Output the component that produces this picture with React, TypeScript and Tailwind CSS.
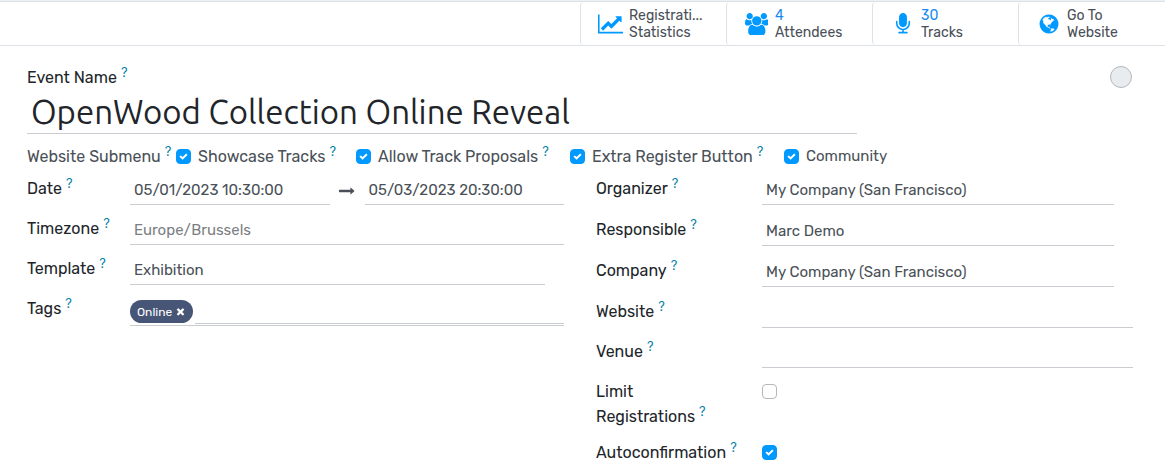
import { useId } from "react";
import type { ReactNode } from "react";

const LINE_CHART =
  "M2048 1536v128h-2048v-1536h128v1408h1920zM1920 288v435q0 21-19.5 29.5t-35.5-7.5l-121-121-633 633q-10 10-23 10t-23-10l-233-233-416 416-192-192 585-585q10-10 23-10t23 10l233 233 464-464-121-121q-16-16-7.5-35.5t29.5-19.5h435q14 0 23 9t9 23z";
const GROUP =
  "M593 896q-162 5-265 128h-134q-82 0-138-40.5t-56-118.5q0-353 124-353 6 0 43.5 21t97.5 42.5 119 21.5q67 0 133-23-5 37-5 66 0 139 81 256zm1071 637q0 120-73 189.5t-194 69.5h-874q-121 0-194-69.5t-73-189.5q0-53 3.5-103.5t14-109 26.5-108.5 43-97.5 62-81 85.5-53.5 111.5-20q10 0 43 21.5t73 48 107 48 135 21.5 135-21.5 107-48 73-48 43-21.5q61 0 111.5 20t85.5 53.5 62 81 43 97.5 26.5 108.5 14 109 3.5 103.5zm-1024-1277q0 106-75 181t-181 75-181-75-75-181 75-181 181-75 181 75 75 181zm704 384q0 159-112.5 271.5t-271.5 112.5-271.5-112.5-112.5-271.5 112.5-271.5 271.5-112.5 271.5 112.5 112.5 271.5zm576 225q0 78-56 118.5t-138 40.5h-134q-103-123-265-128 81-117 81-256 0-29-5-66 66 23 133 23 59 0 119-21.5t97.5-42.5 43.5-21q124 0 124 353zm-128-609q0 106-75 181t-181 75-181-75-75-181 75-181 181-75 181 75 75 181z";
const MICROPHONE =
  "M1472 704v128q0 221-147.5 384.5t-364.5 187.5v132h256q26 0 45 19t19 45-19 45-45 19h-640q-26 0-45-19t-19-45 19-45 45-19h256v-132q-217-24-364.5-187.5t-147.5-384.5v-128q0-26 19-45t45-19 45 19 19 45v128q0 185 131.5 316.5t316.5 131.5 316.5-131.5 131.5-316.5v-128q0-26 19-45t45-19 45 19 19 45zm-256-384v512q0 132-94 226t-226 94-226-94-94-226v-512q0-132 94-226t226-94 226 94 94 226z";
const GLOBE =
  "M896 128q209 0 385.5 103t279.5 279.5 103 385.5-103 385.5-279.5 279.5-385.5 103-385.5-103-279.5-279.5-103-385.5 103-385.5 279.5-279.5 385.5-103zm274 521q-2 1-9.5 9.5t-13.5 9.5q2 0 4.5-5t5-11 3.5-7q6-7 22-15 14-6 52-12 34-8 51 11-2-2 9.5-13t14.5-12q3-2 15-4.5t15-7.5l2-22q-12 1-17.5-7t-6.5-21q0 2-6 8 0-7-4.5-8t-11.5 1-9 1q-10-3-15-7.5t-8-16.5-4-15q-2-5-9.5-11t-9.5-10q-1-2-2.5-5.5t-3-6.5-4-5.5-5.5-2.5-7 5-7.5 10-4.5 5q-3-2-6-1.5t-4.5 1-4.5 3-5 3.5q-3 2-8.5 3t-8.5 2q15-5-1-11-10-4-16-3 9-4 7.5-12t-8.5-14h5q-1-4-8.5-8.5t-17.5-8.5-13-6q-8-5-34-9.5t-33-.5q-5 6-4.5 10.5t4 14 3.5 12.5q1 6-5.5 13t-6.5 12q0 7 14 15.5t10 21.5q-3 8-16 16t-16 12q-5 8-1.5 18.5t10.5 16.5q2 2 1.5 4t-3.5 4.5-5.5 4-6.5 3.5l-3 2q-11 5-20.5-6t-13.5-26q-7-25-16-30-23-8-29 1-5-13-41-26-25-9-58-4 6-1 0-15-7-15-19-12 3-6 4-17.5t1-13.5q3-13 12-23 1-1 7-8.5t9.5-13.5.5-6q35 4 50-11 5-5 11.5-17t10.5-17q9-6 14-5.5t14.5 5.5 14.5 5q14 1 15.5-11t-7.5-20q12 1 3-17-4-7-8-9-12-4-27 5-8 4 2 8-1-1-9.5 10.5t-16.5 17.5-16-5q-1-1-5.5-13.5t-9.5-13.5q-8 0-16 15 3-8-11-15t-24-8q19-12-8-27-7-4-20.5-5t-19.5 4q-5 7-5.5 11.5t5 8 10.5 5.5 11.5 4 8.5 3q14 10 8 14-2 1-8.5 3.5t-11.5 4.5-6 4q-3 4 0 14t-2 14q-5-5-9-17.5t-7-16.5q7 9-25 6l-10-1q-4 0-16 2t-20.5 1-13.5-8q-4-8 0-20 1-4 4-2-4-3-11-9.5t-10-8.5q-46 15-94 41 6 1 12-1 5-2 13-6.5t10-5.5q34-14 42-7l5-5q14 16 20 25-7-4-30-1-20 6-22 12 7 12 5 18-4-3-11.5-10t-14.5-11-15-5q-16 0-22 1-146 80-235 222 7 7 12 8 4 1 5 9t2.5 11 11.5-3q9 8 3 19 1-1 44 27 19 17 21 21 3 11-10 18-1-2-9-9t-9-4q-3 5 .5 18.5t10.5 12.5q-7 0-9.5 16t-2.5 35.5-1 23.5l2 1q-3 12 5.5 34.5t21.5 19.5q-13 3 20 43 6 8 8 9 3 2 12 7.5t15 10 10 10.5q4 5 10 22.5t14 23.5q-2 6 9.5 20t10.5 23q-1 0-2.5 1t-2.5 1q3 7 15.5 14t15.5 13q1 3 2 10t3 11 8 2q2-20-24-62-15-25-17-29-3-5-5.5-15.5t-4.5-14.5q2 0 6 1.5t8.5 3.5 7.5 4 2 3q-3 7 2 17.5t12 18.5 17 19 12 13q6 6 14 19.5t0 13.5q9 0 20 10t17 20q5 8 8 26t5 24q2 7 8.5 13.5t12.5 9.5l16 8 13 7q5 2 18.5 10.5t21.5 11.5q10 4 16 4t14.5-2.5 13.5-3.5q15-2 29 15t21 21q36 19 55 11-2 1 .5 7.5t8 15.5 9 14.5 5.5 8.5q5 6 18 15t18 15q6-4 7-9-3 8 7 20t18 10q14-3 14-32-31 15-49-18 0-1-2.5-5.5t-4-8.5-2.5-8.5 0-7.5 5-3q9 0 10-3.5t-2-12.5-4-13q-1-8-11-20t-12-15q-5 9-16 8t-16-9q0 1-1.5 5.5t-1.5 6.5q-13 0-15-1 1-3 2.5-17.5t3.5-22.5q1-4 5.5-12t7.5-14.5 4-12.5-4.5-9.5-17.5-2.5q-19 1-26 20-1 3-3 10.5t-5 11.5-9 7q-7 3-24 2t-24-5q-13-8-22.5-29t-9.5-37q0-10 2.5-26.5t3-25-5.5-24.5q3-2 9-9.5t10-10.5q2-1 4.5-1.5t4.5 0 4-1.5 3-6q-1-1-4-3-3-3-4-3 7 3 28.5-1.5t27.5 1.5q15 11 22-2 0-1-2.5-9.5t-.5-13.5q5 27 29 9 3 3 15.5 5t17.5 5q3 2 7 5.5t5.5 4.5 5-.5 8.5-6.5q10 14 12 24 11 40 19 44 7 3 11 2t4.5-9.5 0-14-1.5-12.5l-1-8v-18l-1-8q-15-3-18.5-12t1.5-18.5 15-18.5q1-1 8-3.5t15.5-6.5 12.5-8q21-19 15-35 7 0 11-9-1 0-5-3t-7.5-5-4.5-2q9-5 2-16 5-3 7.5-11t7.5-10q9 12 21 2 7-8 1-16 5-7 20.5-10.5t18.5-9.5q7 2 8-2t1-12 3-12q4-5 15-9t13-5l17-11q3-4 0-4 18 2 31-11 10-11-6-20 3-6-3-9.5t-15-5.5q3-1 11.5-.5t10.5-1.5q15-10-7-16-17-5-43 12zm-163 877q206-36 351-189-3-3-12.5-4.5t-12.5-3.5q-18-7-24-8 1-7-2.5-13t-8-9-12.5-8-11-7q-2-2-7-6t-7-5.5-7.5-4.5-8.5-2-10 1l-3 1q-3 1-5.5 2.5t-5.5 3-4 3 0 2.5q-21-17-36-22-5-1-11-5.5t-10.5-7-10-1.5-11.5 7q-5 5-6 15t-2 13q-7-5 0-17.5t2-18.5q-3-6-10.5-4.5t-12 4.5-11.5 8.5-9 6.5-8.5 5.5-8.5 7.5q-3 4-6 12t-5 11q-2-4-11.5-6.5t-9.5-5.5q2 10 4 35t5 38q7 31-12 48-27 25-29 40-4 22 12 26 0 7-8 20.5t-7 21.5q0 6 2 16z";
const CHECK =
  "M1671 566q0 40-28 68l-724 724-136 136q-28 28-68 28t-68-28l-136-136-362-362q-28-28-28-68t28-68l136-136q28-28 68-28t68 28l294 295 656-657q28-28 68-28t68 28l136 136q28 28 28 68z";
const TIMES =
  "M1490 1322q0 40-28 68l-136 136q-28 28-68 28t-68-28l-294-294-294 294q-28 28-68 28t-68-28l-136-136q-28-28-28-68t28-68l294-294-294-294q-28-28-28-68t28-68l136-136q28-28 68-28t68 28l294 294 294-294q28-28 68-28t68 28l136 136q28 28 28 68t-28 68l-294 294 294 294q28 28 28 68z";
const ARROW =
  "M1728 893q0 14-10 24l-384 354q-16 14-35 6-19-9-19-29v-224h-1248q-14 0-23-9t-9-23v-192q0-14 9-23t23-9h1248v-224q0-21 19-29t35 5l384 350q10 10 10 23z";

function Glyph({ d, wide = 1792, className }: { d: string; wide?: number; className: string }) {
  return (
    <svg viewBox={`0 0 ${wide} 1792`} className={className} fill="currentColor" aria-hidden="true">
      <path d={d} />
    </svg>
  );
}

function Help() {
  return <sup className="ml-1 font-['Inter','Liberation_Sans',sans-serif] text-[13px] leading-none text-[#0180a5]">?</sup>;
}

function StatButton({ icon, wide, top, bottom, highlight = false }: {
  icon: string;
  wide?: number;
  top: string;
  bottom: string;
  highlight?: boolean;
}) {
  return (
    <button type="button" className="flex w-[146px] items-center gap-[5px] rounded-l-sm border-l border-[#dee2e6] pl-4 text-left">
      <span className="flex w-[27px] shrink-0 justify-center text-[#0099ff]">
        <Glyph d={icon} wide={wide} className="h-[22px] w-auto" />
      </span>
      <span className="flex flex-col text-sm leading-[17px] text-[#495057]">
        <span className={highlight ? "text-[#1a8cf0]" : ""}>{top}</span>
        <span>{bottom}</span>
      </span>
    </button>
  );
}

function Tick({ id, checked = false }: { id: string; checked?: boolean }) {
  return (
    <span className="relative flex size-[15px] shrink-0">
      <input
        id={id}
        type="checkbox"
        defaultChecked={checked}
        className="peer size-[15px] appearance-none rounded border border-[#b5b8bb] bg-white checked:border-[#0099ff] checked:bg-[#0099ff]"
      />
      <Glyph d={CHECK} className="pointer-events-none absolute inset-[3px] hidden size-[9px] text-white peer-checked:block" />
    </span>
  );
}

function Option({ label, help = false, small = false }: { label: string; help?: boolean; small?: boolean }) {
  const id = useId();
  return (
    <span className="flex items-center gap-[7px] whitespace-nowrap">
      <Tick id={id} checked />
      <label htmlFor={id} className={small ? "text-[15px]" : ""}>
        {label}
        {help && <Help />}
      </label>
    </span>
  );
}

const FIELD = "h-[29px] w-full min-w-0 border-b border-[#c9ccd0] bg-transparent px-1 text-[15px] text-[#495057] outline-none placeholder:text-[#7c7f83]";

function Row({ label, id, children }: { label: string; id: string; children: ReactNode }) {
  return (
    <>
      <label htmlFor={id} className="pr-5 leading-[25px] text-[#212529]">
        {label}
        <Help />
      </label>
      <div className="flex min-w-0 items-start">{children}</div>
    </>
  );
}

export default function App() {
  return (
    <div className="min-h-screen border-t border-[#e8f1f5] bg-white font-['Rubik','Roboto',sans-serif] text-base text-[#495057]">
      <header className="flex h-[45px] justify-end border-y border-[#dee2e6] pr-px">
        <StatButton icon={LINE_CHART} wide={2048} top="Registrati..." bottom="Statistics" />
        <StatButton icon={GROUP} wide={1920} top="4" bottom="Attendees" highlight />
        <StatButton icon={MICROPHONE} top="30" bottom="Tracks" highlight />
        <StatButton icon={GLOBE} top="Go To" bottom="Website" />
      </header>

      <main className="pt-[19px] pr-8 pl-[27px]">
        <div className="flex items-start justify-between">
          <div className="flex w-3/4 flex-col">
            <label htmlFor="name" className="leading-[25px] text-[#212529]">
              Event Name
              <Help />
            </label>
            <input
              id="name"
              defaultValue="OpenWood Collection Online Reveal"
              className="h-11 w-full border-b border-[#c9ccd0] px-1 font-['Ubuntu','Noto_Sans',sans-serif] text-[33px] text-[#212529] outline-none"
            />
          </div>
          <button type="button" aria-label="Status" className="mt-px mr-px size-[22px] rounded-full border border-[#b4b8bc] bg-[#e9ecef]" />
        </div>

        <div className="mt-2.5 grid grid-cols-[149px_180px_214px_214px_auto] items-center leading-[25px]">
          <span className="whitespace-nowrap">
            Website Submenu
            <Help />
          </span>
          <Option label="Showcase Tracks" help />
          <Option label="Allow Track Proposals" help />
          <Option label="Extra Register Button" help />
          <Option label="Community" small />
        </div>

        <div className="mt-[7px] grid grid-cols-2 items-start gap-x-8">
          <div className="grid grid-cols-[103px_1fr] gap-y-[11px]">
            <Row label="Date" id="date">
              <input id="date" defaultValue="05/01/2023 10:30:00" className={FIELD} />
              <span className="flex w-[35px] shrink-0 items-center justify-center self-center">
                <Glyph d={ARROW} className="size-4" />
              </span>
              <input aria-label="End date" defaultValue="05/03/2023 20:30:00" className={FIELD} />
            </Row>
            <Row label="Timezone" id="timezone">
              <input id="timezone" placeholder="Europe/Brussels" className={FIELD} />
            </Row>
            <Row label="Template" id="template">
              <span className="flex w-full pr-[19px]">
                <input id="template" defaultValue="Exhibition" className={FIELD} />
              </span>
            </Row>
            <Row label="Tags" id="tags">
              <div className="flex w-full items-center gap-0.5 border-b border-[#c9ccd0] pt-[3px] pb-px">
                <span className="flex h-[23px] shrink-0 items-center gap-[3px] rounded-full bg-[#475577] px-[7px] text-xs leading-none text-white">
                  Online
                  <button type="button" aria-label="Remove Online">
                    <Glyph d={TIMES} className="size-[11px]" />
                  </button>
                </span>
                <input id="tags" className="h-[25px] w-full min-w-0 border-b border-[#c9ccd0] outline-none" />
              </div>
            </Row>
          </div>

          <div className="grid grid-cols-[166px_1fr] gap-y-[11px]">
            <Row label="Organizer" id="organizer">
              <span className="flex w-full pr-[19px] pb-px">
                <input id="organizer" defaultValue="My Company (San Francisco)" className={FIELD} />
              </span>
            </Row>
            <Row label="Responsible" id="responsible">
              <span className="flex w-full pr-[19px] pb-px">
                <input id="responsible" defaultValue="Marc Demo" className={FIELD} />
              </span>
            </Row>
            <Row label="Company" id="company">
              <span className="flex w-full pr-[19px] pb-px">
                <input id="company" defaultValue="My Company (San Francisco)" className={FIELD} />
              </span>
            </Row>
            <Row label="Website" id="website">
              <input id="website" className={FIELD} />
            </Row>
            <Row label="Venue" id="venue">
              <input id="venue" className={FIELD} />
            </Row>
            <Row label="Limit Registrations" id="limit">
              <span className="flex h-[25px] items-center">
                <Tick id="limit" />
              </span>
            </Row>
            <Row label="Autoconfirmation" id="autoconfirm">
              <span className="flex h-[25px] items-center">
                <Tick id="autoconfirm" checked />
              </span>
            </Row>
          </div>
        </div>
      </main>
    </div>
  );
}
